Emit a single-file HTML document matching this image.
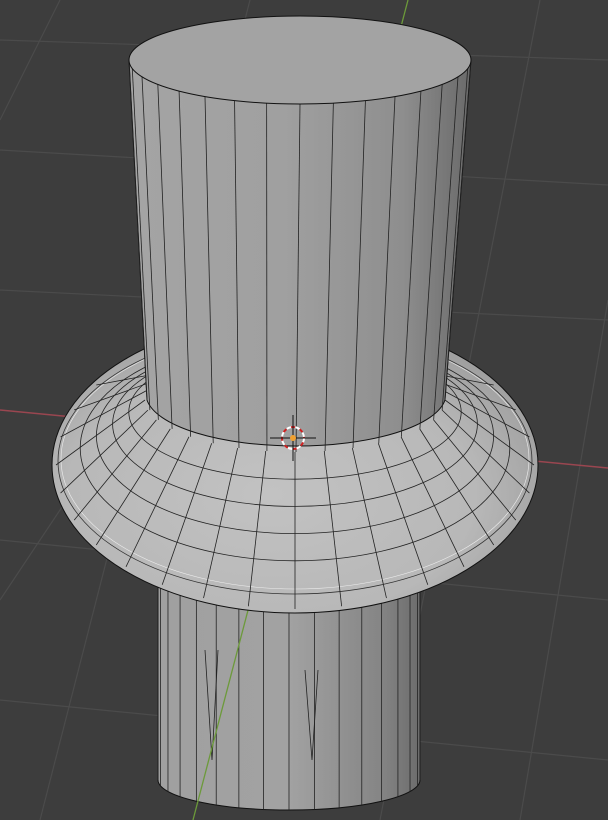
<!DOCTYPE html>
<html><head><meta charset="utf-8"><style>
html,body{margin:0;padding:0;background:#3d3d3d;width:608px;height:820px;overflow:hidden}
svg{display:block}
</style></head><body>
<svg id="s" width="608" height="820" viewBox="0 0 608 820" xmlns="http://www.w3.org/2000/svg">
<defs>
<linearGradient id="cyl" x1="0" x2="1" y1="0" y2="0">
<stop offset="0" stop-color="#a4a4a4"/><stop offset="0.45" stop-color="#a0a0a0"/><stop offset="0.8" stop-color="#8e8e8e"/><stop offset="1" stop-color="#6a6a6a"/>
</linearGradient>
<linearGradient id="cyl2" x1="0" x2="1">
<stop offset="0" stop-color="#a0a0a0"/><stop offset="0.5" stop-color="#a2a2a2"/><stop offset="0.85" stop-color="#858585"/><stop offset="1" stop-color="#6c6c6c"/>
</linearGradient>
<radialGradient id="fl" cx="0.45" cy="0.6" r="0.6">
<stop offset="0" stop-color="#c2c2c2"/><stop offset="0.7" stop-color="#b8b8b8"/><stop offset="1" stop-color="#a0a0a0"/>
</radialGradient>
</defs>
<rect width="608" height="820" fill="#3d3d3d"/>
<g id="grid" stroke="#4b4b4b" stroke-width="1.2" fill="none"></g>
<line x1="0" y1="410" x2="608" y2="468" stroke="#9a4650" stroke-width="1.5"/>
<g id="lower"></g>
<line x1="408" y1="0" x2="193" y2="820" stroke="#6c9a3a" stroke-width="1.3"/>
<g id="flange"></g>
<g id="upper"></g>
<g>
<circle cx="293" cy="438" r="11" fill="none" stroke="#fff" stroke-width="2" stroke-dasharray="5 4"/>
<circle cx="293" cy="438" r="11" fill="none" stroke="#d02020" stroke-width="2" stroke-dasharray="4 5" stroke-dashoffset="4.5"/>
<line x1="270" y1="438" x2="316" y2="438" stroke="#111" stroke-width="1"/>
<line x1="293" y1="415" x2="293" y2="461" stroke="#111" stroke-width="1"/>
<circle cx="293" cy="438" r="3" fill="#f0a030"/>
</g>
</svg>
<script>
var NS="http://www.w3.org/2000/svg";
function el(p,t,a){var e=document.createElementNS(NS,t);for(var k in a)e.setAttribute(k,a[k]);document.getElementById(p).appendChild(e);return e;}
var gl=[[0,150,608,185],[0,40,608,60],[0,290,608,320],[0,540,608,600],[0,700,608,760],[60,0,0,120],[250,0,40,820],[540,0,380,820],[608,300,520,820],[0,600,120,420]];
gl.forEach(function(l){el("grid","line",{x1:l[0],y1:l[1],x2:l[2],y2:l[3]});});
var N=32;
el("lower","path",{d:"M158,560 L420,560 L420,780 A131,30 0 0 1 158,780 Z",fill:"url(#cyl2)",stroke:"#111","stroke-width":1});
for(var i=0;i<=N/2;i++){var th=Math.PI*i/(N/2);var x=289-131*Math.cos(th);var y=780+30*Math.sin(th);el("lower","line",{x1:x,y1:560,x2:x,y2:y,stroke:"#222","stroke-width":0.8});}
el("lower","path",{d:"M205,650 L212,760 L218,650 M305,670 L312,760 L318,670",stroke:"#222","stroke-width":0.8,fill:"none"});
var cx=295,cy=465,rx=243,ry=148;var icx=295,icy=400,irx=150,iry=52;
el("flange","ellipse",{cx:cx,cy:cy,rx:rx,ry:ry,fill:"url(#fl)",stroke:"#111","stroke-width":1});
el("flange","ellipse",{cx:cx,cy:cy-4,rx:rx-6,ry:ry-15,fill:"none",stroke:"#333","stroke-width":0.8});
el("flange","ellipse",{cx:cx,cy:cy-6,rx:rx-9,ry:ry-18,fill:"none",stroke:"#eee","stroke-width":0.6});
var R=5;
for(var r=1;r<R;r++){var rr=r/R;
var ex=irx+(rx-12-irx)*rr, ey=iry+(ry-20-iry)*rr, ecy=icy+(cy-5-icy)*rr;
el("flange","ellipse",{cx:cx,cy:ecy,rx:ex,ry:ey,fill:"none",stroke:"#222","stroke-width":0.8});}
for(var i=-3;i<=N/2+3;i++){var th=Math.PI*i/(N/2);
var x1=icx-irx*Math.cos(th),y1=icy+iry*Math.sin(th),x2=cx-(rx-4)*Math.cos(th),y2=cy+(ry-4)*Math.sin(th);
el("flange","line",{x1:x1,y1:y1,x2:x2,y2:y2,stroke:"#222","stroke-width":0.8});}
var ucx=300,ucy=60,urx=171,ury=44;
el("upper","path",{d:"M129,60 L147,400 A150,52 0 0 0 445,400 L471,60 Z",fill:"url(#cyl)",stroke:"#111","stroke-width":1});
for(var i=0;i<=N/2;i++){var th=Math.PI*i/(N/2);var c=Math.cos(th),s=Math.sin(th);
var x1=ucx-urx*c,y1=ucy+ury*s,x2=296-149*c,y2=400+52*s;
el("upper","line",{x1:x1,y1:y1,x2:x2,y2:y2,stroke:"#222","stroke-width":0.8});}
el("upper","ellipse",{cx:ucx,cy:ucy,rx:urx,ry:ury,fill:"#a3a3a3",stroke:"#111","stroke-width":1});
</script>
</body></html>
